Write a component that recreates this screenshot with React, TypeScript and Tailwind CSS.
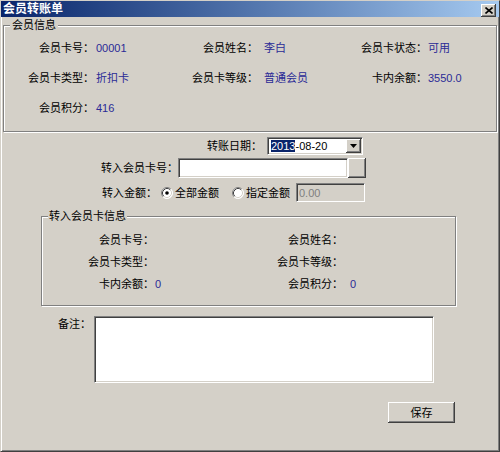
import React from 'react';

const sunken =
  'border border-t-[#808080] border-l-[#808080] border-r-white border-b-white shadow-[inset_1px_1px_0_#404040,inset_-1px_-1px_0_#d4d0c8]';
const raised =
  'bg-[#d4d0c8] shadow-[inset_-1px_-1px_0_#404040,inset_1px_1px_0_#fff,inset_-2px_-2px_0_#808080,inset_2px_2px_0_#d4d0c8]';
const etched = 'border border-[#808080] shadow-[1px_1px_0_#fff,inset_1px_1px_0_#fff] min-w-0';
const value = 'text-[#2a2a96]';

const Radio: React.FC<{ checked?: boolean }> = ({ checked }) => (
  <svg width="12" height="12" viewBox="0 0 12 12" className="shrink-0">
    <circle cx="6" cy="6" r="5.5" fill="#fff" />
    <path d="M2.11 9.89 A5.5 5.5 0 0 1 9.89 2.11" fill="none" stroke="#808080" />
    <path d="M9.89 2.11 A5.5 5.5 0 0 1 2.11 9.89" fill="none" stroke="#fff" />
    <path d="M2.82 9.18 A4.5 4.5 0 0 1 9.18 2.82" fill="none" stroke="#404040" />
    <path d="M9.18 2.82 A4.5 4.5 0 0 1 2.82 9.18" fill="none" stroke="#d4d0c8" />
    {checked && <circle cx="6" cy="6" r="1.8" fill="#000" />}
  </svg>
);

const memberInfo = [
  ['会员卡号：', '00001', '会员姓名：', '李白', '会员卡状态：', '可用'],
  ['会员卡类型：', '折扣卡', '会员卡等级：', '普通会员', '卡内余额：', '3550.0'],
  ['会员积分：', '416', '', '', '', ''],
];

const targetInfo = [
  ['会员卡号：', '', '会员姓名：', ''],
  ['会员卡类型：', '', '会员卡等级：', ''],
  ['卡内余额：', '0', '会员积分：', '0'],
];

export default function App() {
  return (
    <div className="w-[500px] h-[452px] overflow-hidden bg-[#d4d0c8] border border-t-[#d4d0c8] border-l-[#d4d0c8] border-r-[#404040] border-b-[#404040] shadow-[inset_1px_1px_0_#fff,inset_-1px_-1px_0_#808080] font-['Liberation_Sans','Noto_Sans_CJK_SC',sans-serif] text-[11px] leading-[12px] text-black">
      {/* title bar */}
      <div className="h-[16px] flex items-center justify-between bg-linear-to-r from-[#0a246a] to-[#a6caf0] pl-[2px] pr-[3px]">
        <span className="text-white font-bold text-[12px] leading-[14px]">会员转账单</span>
        <div className={`w-[15px] h-[13px] mt-[2px] flex items-center justify-center ${raised}`}>
          <svg width="8" height="7" viewBox="0 0 8 7">
            <path d="M0.5 0.5 L7.5 6.5 M7.5 0.5 L0.5 6.5" stroke="#000" strokeWidth="1.6" />
          </svg>
        </div>
      </div>

      {/* member info */}
      <fieldset className={`mx-[2px] mt-[2px] pt-[2px] pb-[8px] ${etched}`}>
        <legend className="ml-[6px] px-[2px] bg-[#d4d0c8] relative leading-[12px]">会员信息</legend>
        <div className="grid grid-cols-[90px_86px_78px_82px_87px_1fr] auto-rows-[30px] items-center">
          {memberInfo.map((row, i) => (
            <React.Fragment key={i}>
              <span className="text-right whitespace-nowrap">{row[0]}</span>
              <span className={`pl-[2px] ${value}`}>{row[1]}</span>
              <span className="text-right whitespace-nowrap">{row[2]}</span>
              <span className={`pl-[6px] ${value}`}>{row[3]}</span>
              <span className="text-right whitespace-nowrap">{row[4]}</span>
              <span className={`pl-[1px] ${value}`}>{row[5]}</span>
            </React.Fragment>
          ))}
        </div>
      </fieldset>

      {/* transfer date */}
      <div className="mt-[5px] ml-[206px] h-[18px] flex items-center">
        <span className="w-[55px] whitespace-nowrap">转账日期：</span>
        <div className={`ml-[5px] w-[96px] h-[18px] bg-white flex items-center justify-between pl-[3px] pr-[1px] ${sunken}`}>
          <span className="leading-[12px]">
            <span className="bg-[#0a246a] text-white">2013</span>-08-20
          </span>
          <div className={`w-[15px] h-[14px] flex items-center justify-center ${raised}`}>
            <svg width="7" height="4" viewBox="0 0 7 4">
              <path d="M0 0 H7 L3.5 4 Z" fill="#000" />
            </svg>
          </div>
        </div>
      </div>

      {/* target card number */}
      <div className="mt-[3px] ml-[100px] h-[20px] flex items-center">
        <span className="w-[77px] whitespace-nowrap">转入会员卡号：</span>
        <input
          type="text"
          className={`w-[170px] h-[20px] bg-white px-[3px] outline-none text-[11px] ${sunken}`}
        />
        <button className={`w-[18px] h-[20px] ${raised}`} />
      </div>

      {/* amount */}
      <div className="mt-[5px] ml-[101px] h-[19px] flex items-center">
        <span className="w-[55px] whitespace-nowrap">转入金额：</span>
        <span className="ml-[4px]">
          <Radio checked />
        </span>
        <span className="ml-[2px]">全部金额</span>
        <span className="ml-[13px]">
          <Radio />
        </span>
        <span className="ml-[2px]">指定金额</span>
        <input
          type="text"
          disabled
          value="0.00"
          className={`ml-[6px] w-[69px] h-[19px] bg-[#d4d0c8] px-[2px] text-[11px] text-[#808080] ${sunken}`}
        />
      </div>

      {/* target card info */}
      <fieldset className={`mt-[8px] ml-[40px] w-[415px] pt-[7px] pb-[10px] ${etched}`}>
        <legend className="ml-[6px] px-[1px] bg-[#d4d0c8] relative leading-[12px]">转入会员卡信息</legend>
        <div className="grid grid-cols-[112px_96px_93px_1fr] auto-rows-[22px] items-center">
          {targetInfo.map((row, i) => (
            <React.Fragment key={i}>
              <span className="text-right whitespace-nowrap">{row[0]}</span>
              <span className={`pl-[1px] ${value}`}>{row[1]}</span>
              <span className="text-right whitespace-nowrap">{row[2]}</span>
              <span className={`pl-[7px] ${value}`}>{row[3]}</span>
            </React.Fragment>
          ))}
        </div>
      </fieldset>

      {/* remarks */}
      <div className="mt-[10px] ml-[57px] flex items-start">
        <span className="pt-[2px] w-[36px] whitespace-nowrap">备注：</span>
        <textarea className={`w-[340px] h-[67px] bg-white resize-none outline-none p-[2px] text-[11px] ${sunken}`} />
      </div>

      <div className="mt-[19px] ml-[387px]">
        <button className={`w-[67px] h-[21px] flex items-center justify-center ${raised}`}>保存</button>
      </div>
    </div>
  );
}
